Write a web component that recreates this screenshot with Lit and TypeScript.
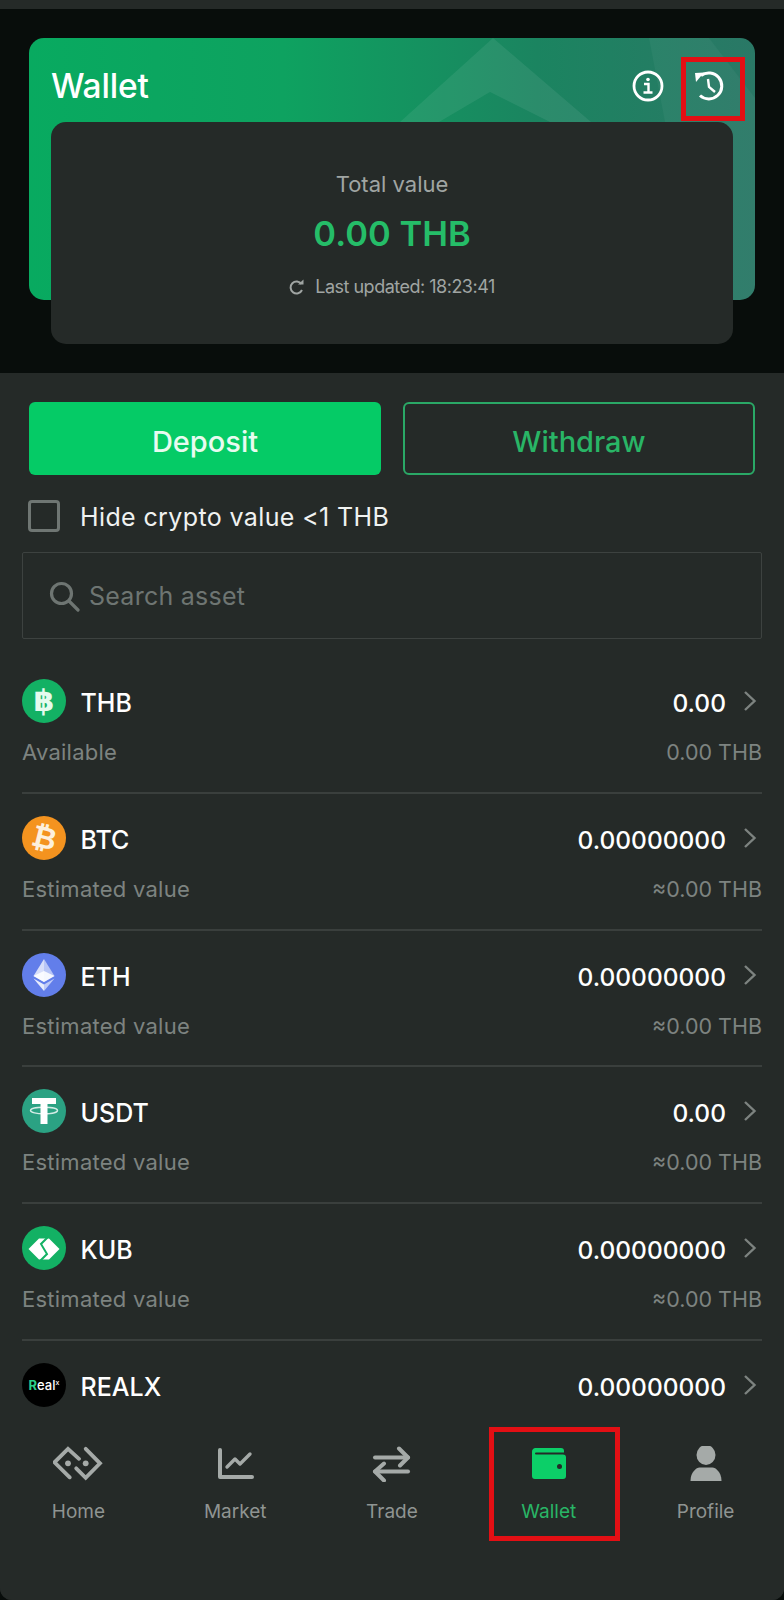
import { LitElement, css, html, svg } from "lit";
import { customElement } from "lit/decorators.js";

type Asset = { name: string; icon: unknown; sub?: string; value: string; fiat?: string };

const thbIcon = html`<span class="coin" style="background:#13b164"><span class="glyph">฿</span></span>`;
const btcIcon = html`<span class="coin" style="background:#f4931f"><span class="glyph tilt">₿</span></span>`;

const ethIcon = html`<span class="coin" style="background:#627eea">
  <svg viewBox="0 0 44 44" width="44" height="44">
    <polygon points="22,6 11.5,23 22,29" fill="#fff" opacity=".75" />
    <polygon points="22,6 32.500,23 22,29" fill="#fff" opacity=".55" />
    <polygon points="22,18 11.5,23 22,29 32.5,23" fill="#fff" opacity=".85" />
    <polygon points="11.5,25.500 22,38 22,31.500" fill="#fff" opacity=".85" />
    <polygon points="32.5,25.500 22,38 22,31.500" fill="#fff" opacity=".6" />
  </svg>
</span>`;

const usdtIcon = html`<span class="coin" style="background:#2ba283">
  <svg viewBox="0 0 44 44" width="44" height="44">
    <path d="M10 9h24v6h-8.500v20h-7V15H10z" fill="#fff" />
    <ellipse cx="22" cy="21.500" rx="13.500" ry="3.300" fill="none" stroke="#fff" stroke-width="1.400" opacity=".8" />
  </svg>
</span>`;

const kubIcon = html`<span class="coin" style="background:#13b164">
  <svg viewBox="0 0 44 44" width="44" height="44">
    <path d="M6.500 23L17 12.500h10L37.500 23 27 33.500H17z" fill="#fff" />
    <path d="M26 11l-7 7 6 10-7 7" fill="none" stroke="#13b164" stroke-width="2" />
  </svg>
</span>`;

const realxIcon = html`<span class="coin realx"><b>R</b>eal<sup>x</sup></span>`;

const assets: Asset[] = [
  { name: "THB", icon: thbIcon, sub: "Available", value: "0.00", fiat: "0.00 THB" },
  { name: "BTC", icon: btcIcon, sub: "Estimated value", value: "0.00000000", fiat: "≈0.00 THB" },
  { name: "ETH", icon: ethIcon, sub: "Estimated value", value: "0.00000000", fiat: "≈0.00 THB" },
  { name: "USDT", icon: usdtIcon, sub: "Estimated value", value: "0.00", fiat: "≈0.00 THB" },
  { name: "KUB", icon: kubIcon, sub: "Estimated value", value: "0.00000000", fiat: "≈0.00 THB" },
  // sub line of this row sits behind the bottom nav
  { name: "REALX", icon: realxIcon, value: "0.00000000" },
];

const homeIcon = svg`<g fill="none" stroke="currentColor" stroke-width="3.800" stroke-linecap="round" stroke-linejoin="miter">
    <path d="M31.700 42.300L16.500 27.300 30 13.800l11 10" />
    <path d="M47.700 13.800L62 28.300 47.700 42.800l-9.500-9.500" />
  </g>
  <circle cx="30" cy="28.300" r="2.900" fill="currentColor" /><circle cx="47.700" cy="28.300" r="2.900" fill="currentColor" />`;

const tabs = [
  { label: "Home", box: "15 12 50 34", w: 50, h: 34, icon: homeIcon },
  {
    label: "Market",
    box: "172 11 46 34",
    w: 46,
    h: 34,
    icon: svg`<g fill="none" stroke="currentColor" stroke-width="4" stroke-linecap="round" stroke-linejoin="round">
      <path d="M180 14v27h32" /></g>
      <path d="M187 31l8-8 5 5 10-10" fill="none" stroke="currentColor" stroke-width="3.400" stroke-linecap="round" stroke-linejoin="round" />`,
  },
  {
    label: "Trade",
    box: "10 10 46 34",
    w: 46,
    h: 34,
    icon: svg`<g fill="none" stroke="currentColor" stroke-width="4" stroke-linecap="round" stroke-linejoin="round">
      <path d="M16 20.500h33" /><path d="M40 11.500l9 9-8 8" />
      <path d="M49 34.500H16" /><path d="M25 26.500l-9 8 9 9" /></g>`,
  },
  {
    label: "Wallet",
    box: "167 12 46 34",
    w: 46,
    h: 34,
    icon: svg`<path d="M176 13h26a3 3 0 0 1 3 3v1.500h-28a1 1 0 0 0 0 2h27a3 3 0 0 1 3 3V41a3 3 0 0 1-3 3h-28a3 3 0 0 1-3-3V17a4 4 0 0 1 3-4z" fill="currentColor" />
      <circle cx="200.500" cy="31.500" r="2.500" fill="#252a28" />`,
  },
  {
    label: "Profile",
    box: "322 11 46 36",
    w: 46,
    h: 36,
    icon: svg`<ellipse cx="345" cy="20" rx="9.500" ry="10" fill="currentColor" />
      <path d="M329.500 46c0-9 6-13.500 9-13.500h13c3 0 9 4.500 9 13.500z" fill="currentColor" />`,
  },
];

@customElement("app-root")
export class AppRoot extends LitElement {
  static styles = css`
    :host {
      display: block;
      width: 784px;
      height: 1600px;
      background: #080d0b;
      font-family: Inter, "Liberation Sans", sans-serif;
    }
    .shell {
      height: 1600px;
      box-sizing: border-box;
      padding-top: 9px;
      display: flex;
      flex-direction: column;
      overflow: hidden;
      background: #252a28;
      border-radius: 0 0 12px 12px;
      color: #fff;
    }
    .head {
      height: 364px;
      flex: none;
      box-sizing: border-box;
      padding: 29px 29px 0;
      background: #080d0b;
    }
    .banner {
      position: relative;
      height: 262px;
      padding: 0 22px;
      border-radius: 15px;
      background: linear-gradient(90deg, #08aa60 0%, #0ea260 35%, #1b8460 70%, #2a7866 100%);
    }
    .banner-art {
      position: absolute;
      inset: 0;
      width: 100%;
      height: 100%;
      border-radius: 15px;
    }
    .banner-bar {
      position: relative;
      height: 84px;
      box-sizing: border-box;
      padding-top: 12px;
      display: flex;
      align-items: center;
      gap: 16px;
    }
    .banner-bar h1 {
      margin: 0 auto 0 0;
      font-size: 33.500px;
      font-weight: 500;
      letter-spacing: -0.2px;
    }
    .hist {
      width: 64px;
      height: 64px;
      box-sizing: border-box;
      margin: 6px -12px 0 0;
      border: 5px solid #e30f14;
      display: grid;
      place-items: center;
    }
    .hist svg {
      margin: 0 8px 6px 0;
    }
    .total {
      position: relative;
      height: 222px;
      box-sizing: border-box;
      border-radius: 15px;
      background: #252a28;
      padding-top: 47px;
      text-align: center;
    }
    .total-label {
      font-size: 22px;
      line-height: 30px;
      color: #a0a5a3;
    }
    .total-value {
      margin-top: 13px;
      font-size: 34.500px;
      line-height: 44px;
      font-weight: 600;
      color: #25bd68;
    }
    .total-time {
      margin-top: 18px;
      display: flex;
      justify-content: center;
      align-items: center;
      gap: 10px;
      font-size: 18px;
      line-height: 26px;
      letter-spacing: -0.5px;
      color: #a0a5a3;
    }
    .actions {
      display: grid;
      grid-template-columns: 1fr 1fr;
      gap: 22px;
      margin: 29px 29px 0;
    }
    .btn {
      height: 73px;
      box-sizing: border-box;
      padding-top: 5px;
      border-radius: 6px;
      display: grid;
      place-items: center;
      font-size: 29px;
      font-weight: 500;
    }
    .btn.fill {
      background: #05cb66;
      color: #e8fbf0;
    }
    .btn.line {
      border: 2px solid #2aa866;
      color: #29b566;
    }
    .hide {
      display: flex;
      align-items: center;
      gap: 20px;
      margin: 25px 29px 0 28px;
      font-size: 25px;
      line-height: 30px;
      letter-spacing: 0.38px;
      color: #f0f2f1;
    }
    .check {
      width: 32px;
      height: 32px;
      box-sizing: border-box;
      border: 3px solid #6f7673;
      border-radius: 4px;
    }
    .hide-text {
      padding-top: 2px;
    }
    .search {
      height: 87px;
      box-sizing: border-box;
      margin: 20px 22px 0;
      padding-left: 25px;
      border: 1.5px solid #3d4240;
      border-radius: 2px;
      display: flex;
      align-items: center;
      gap: 9px;
      font-size: 25px;
      letter-spacing: 0.25px;
      color: #6e7572;
    }
    .list {
      flex: 1;
      min-height: 0;
      overflow: hidden;
      margin: 18px 22px 0;
    }
    .row {
      height: 136.75px;
      box-sizing: border-box;
      padding-top: 22px;
      border-bottom: 2px solid #3a3f3d;
    }
    .row:last-child {
      border-bottom: 0;
    }
    .row-top {
      height: 44px;
      display: flex;
      align-items: center;
      font-size: 25px;
      font-weight: 500;
    }
    .name,
    .value {
      padding-top: 4px;
    }
    .coin {
      width: 44px;
      height: 44px;
      flex: none;
      border-radius: 50%;
      margin-right: 14.500px;
      display: grid;
      place-items: center;
      overflow: hidden;
    }
    .glyph {
      font-family: "DejaVu Sans", sans-serif;
      font-weight: 700;
      font-size: 30px;
      line-height: 44px;
      color: #e4fbee;
    }
    .tilt {
      transform: rotate(14deg);
      color: #fdf0dd;
    }
    .realx {
      display: block;
      background: #000;
      font-size: 13px;
      font-weight: 500;
      line-height: 44px;
      text-align: center;
      white-space: nowrap;
    }
    .realx b {
      color: #2bd08a;
      font-weight: 700;
    }
    .realx sup {
      font-size: 7px;
      line-height: 0;
    }
    .value {
      margin-left: auto;
      font-size: 24.500px;
    }
    .chev {
      margin: 0 5px 0 17px;
    }
    .row-sub {
      display: flex;
      justify-content: space-between;
      margin-top: 14px;
      font-size: 22px;
      line-height: 30px;
      letter-spacing: 0.25px;
      color: #7d8380;
    }
    .fiat {
      font-size: 21.500px;
      letter-spacing: 0;
    }
    .nav {
      height: 192px;
      flex: none;
      box-sizing: border-box;
      padding-top: 19px;
      display: grid;
      grid-template-columns: repeat(5, 1fr);
      justify-items: center;
      background: #252a28;
    }
    .tab {
      width: 131px;
      height: 114px;
      box-sizing: border-box;
      border: 5px solid transparent;
      padding-top: 14px;
      display: flex;
      flex-direction: column;
      align-items: center;
      color: #8f9492;
      font-size: 19px;
      line-height: 26px;
    }
    .tab svg {
      height: 36px;
      margin-bottom: 17px;
      color: #a5aaa8;
    }
    .tab.active {
      margin-left: 12px;
      padding-right: 12px;
      border-color: #e30f14;
      color: #29b566;
    }
    .tab.active svg {
      color: #0ccf68;
    }
  `;

  render() {
    return html`
      <div class="shell">
        <section class="head">
          <div class="banner">
            <svg class="banner-art" viewBox="0 0 726 262" preserveAspectRatio="none">
              <polygon points="464,0 371,84 410,84 461,54 521,84 562,84" fill="#fff" opacity=".07" />
              <polygon points="620,0 680,0 726,60 726,262 670,262" fill="#fff" opacity=".04" />
            </svg>
            <div class="banner-bar">
              <h1>Wallet</h1>
              <svg width="34" height="34" viewBox="0 0 34 34" fill="none" stroke="#fff">
                <circle cx="17" cy="17" r="14" stroke-width="2.800" />
                <circle cx="17" cy="10.500" r="1.800" fill="#fff" stroke="none" />
                <path d="M13 15h4.500v8M12.500 23.500h9" stroke-width="2.400" />
              </svg>
              <div class="hist">
                <svg width="36" height="36" viewBox="0 0 36 36" fill="none" stroke="#fff" stroke-width="3">
                  <path d="M10 7.500A13 13 0 1 1 9 27.500" />
                  <polygon points="4,5 13,4.500 5,14" fill="#fff" stroke="none" />
                  <path d="M17 11l1 8 6 5" stroke-width="2.400" />
                </svg>
              </div>
            </div>
            <div class="total">
              <div class="total-label">Total value</div>
              <div class="total-value">0.00 THB</div>
              <div class="total-time">
                <svg width="16" height="18" viewBox="0 0 16 18" fill="none" stroke="#a0a5a3" stroke-width="2">
                  <path d="M12.500 6A6 6 0 1 0 13 12" />
                  <polygon points="9,6.500 14.500,6.500 14.500,1.500" fill="#a0a5a3" stroke="none" />
                </svg>
                Last updated: 18:23:41
              </div>
            </div>
          </div>
        </section>

        <div class="actions">
          <div class="btn fill">Deposit</div>
          <div class="btn line">Withdraw</div>
        </div>

        <label class="hide"><span class="check"></span><span class="hide-text">Hide crypto value &lt;1 THB</span></label>

        <div class="search">
          <svg width="32" height="32" viewBox="0 0 32 32" fill="none" stroke="#6e7572" stroke-width="3.200" stroke-linecap="round">
            <circle cx="13.500" cy="13.500" r="10" />
            <path d="M21 21l9 9" />
          </svg>
          Search asset
        </div>

        <div class="list">
          ${assets.map(
            (a) => html`
              <div class="row">
                <div class="row-top">
                  ${a.icon}
                  <span class="name">${a.name}</span>
                  <span class="value">${a.value}</span>
                  <svg class="chev" width="14" height="22" viewBox="0 0 14 22" fill="none" stroke="#7d8380" stroke-width="2.400">
                    <path d="M2 2l9.500 9L2 20" />
                  </svg>
                </div>
                ${a.sub
                  ? html`<div class="row-sub"><span>${a.sub}</span><span class="fiat">${a.fiat}</span></div>`
                  : ""}
              </div>
            `,
          )}
        </div>

        <nav class="nav">
          ${tabs.map(
            (t) => html`
              <div class="tab ${t.label === "Wallet" ? "active" : ""}">
                <svg viewBox=${t.box} width=${t.w} height=${t.h}>${t.icon}</svg>
                ${t.label}
              </div>
            `,
          )}
        </nav>
      </div>
    `;
  }
}
